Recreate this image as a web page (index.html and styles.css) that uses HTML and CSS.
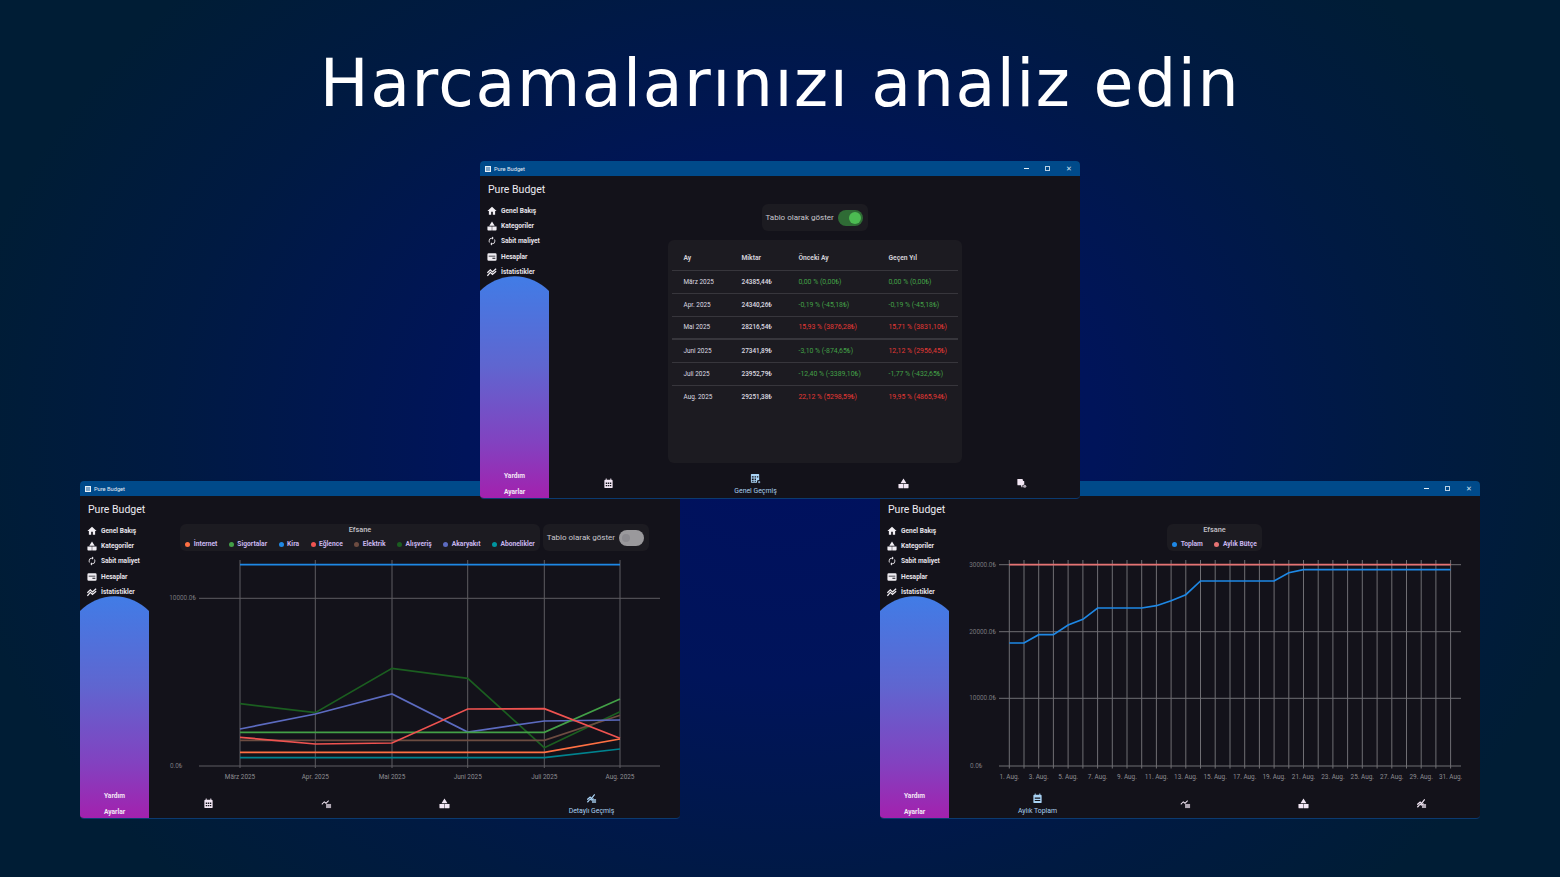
FILE: index.html
```html
<!DOCTYPE html>
<html lang="tr">
<head>
<meta charset="utf-8">
<title>Pure Budget</title>
<link rel="stylesheet" href="styles.css">
</head>
<body>
<svg class="sprite" xmlns="http://www.w3.org/2000/svg">
  <symbol id="i-home" viewBox="0 0 24 24"><path d="M10 21v-7h4v7h5.500v-9H23L12 2 1 12h3.500v9z"/></symbol>
  <symbol id="i-cat" viewBox="0 0 24 24"><path d="M12 1l-6.500 10.500h13zM1 13h10.500v9.500H3a2 2 0 0 1-2-2zM12.500 13H23v7.500a2 2 0 0 1-2 2h-8.500z"/></symbol>
  <symbol id="i-renew" viewBox="0 0 24 24"><path d="M12 6v3l4-4-4-4v3c-4.420 0-8 3.580-8 8 0 1.570.46 3.030 1.240 4.260L6.700 14.800c-.45-.83-.7-1.790-.7-2.800 0-3.310 2.690-6 6-6zm6.760 1.740L17.300 9.200c.44.84.7 1.790.7 2.800 0 3.310-2.690 6-6 6v-3l-4 4 4 4v-3c4.420 0 8-3.580 8-8 0-1.570-.46-3.030-1.240-4.260z"/></symbol>
  <symbol id="i-wallet" viewBox="0 0 24 24"><path fill-rule="evenodd" d="M4 3h16a3 3 0 0 1 3 3v12a3 3 0 0 1-3 3H4a3 3 0 0 1-3-3V6a3 3 0 0 1 3-3zM4 9v2h16V9zM13 14v2h7v-2z"/></symbol>
  <symbol id="i-stats" viewBox="0 0 24 24"><path fill="none" stroke="#f1eef3" stroke-width="3" d="M1 14l7-7 5 5 9-8M1 21l7-8 5 5 9-8"/></symbol>
  <symbol id="i-cal" viewBox="0 0 24 24"><path fill-rule="evenodd" d="M6 1h2v3h8V1h2v3h1a2 2 0 0 1 2 2v14a2 2 0 0 1-2 2H5a2 2 0 0 1-2-2V6a2 2 0 0 1 2-2h1zM6 10v3h3v-3zM10.500 10v3h3v-3zM15 10v3h3v-3zM6 15v3h3v-3zM10.500 15v3h3v-3zM15 15v3h3v-3z"/></symbol>
  <symbol id="i-month" viewBox="0 0 24 24"><path fill-rule="evenodd" d="M6 1h2v3h8V1h2v3h1a2 2 0 0 1 2 2v14a2 2 0 0 1-2 2H5a2 2 0 0 1-2-2V6a2 2 0 0 1 2-2h1zM6 10v2.500h12V10zM6 15v2.500h12V15z"/></symbol>
  <symbol id="i-trend" viewBox="0 0 24 24"><path d="M1 13l6-6 4 3 5-5 1.500 1.500L11 13 7 10l-4.500 4.500z"/><path opacity=".7" d="M11 13h11v9H11z"/></symbol>
  <symbol id="i-table" viewBox="0 0 24 24"><path fill-rule="evenodd" d="M3 2h16a1 1 0 0 1 1 1v12l-4 1-1 5H3a1 1 0 0 1-1-1V3a1 1 0 0 1 1-1zM4 7v3h4V7zM10 7v3h3V7zM15 7v3h3V7zM4 12v3h4v-3zM10 12v3h3v-3zM4 17v2h4v-2zM10 17v2h3v-2z"/><circle cx="20" cy="20" r="2.500" opacity=".7"/></symbol>
  <symbol id="i-pile" viewBox="0 0 24 24"><path d="M3 2h10a2 2 0 0 1 2 2v2l3 1v7l-4 2v4h-2l-1-4H5a2 2 0 0 1-2-2z"/><circle cx="19" cy="18" r="3.500" opacity=".7"/></symbol>
  <symbol id="i-detail" viewBox="0 0 24 24"><path d="M2 13l7-6 3 3 6-8 2 2-8 10-3-3-5.500 5zM2 19l7-7 3 2 4-3 1 2-5 4-3-2-5 6z"/><path opacity=".7" d="M13 13h9v9h-9z"/></symbol>
</svg>

<h1 class="headline">Harcamalarınızı analiz edin</h1>

<!-- sol pencere -->
<section class="window win-left">
  <header class="titlebar">
    <span class="app-icon"></span><span class="app-name">Pure Budget</span>
    <span class="win-controls"><i class="ctl-min"></i><i class="ctl-max"></i><i class="ctl-close">✕</i></span>
  </header>
  <div class="app">
    <aside class="sidebar">
      <div class="brand">Pure Budget</div>
      <nav class="rail">
        <a><svg><use href="#i-home"/></svg>Genel Bakış</a>
        <a><svg><use href="#i-cat"/></svg>Kategoriler</a>
        <a><svg><use href="#i-renew"/></svg>Sabit maliyet</a>
        <a><svg><use href="#i-wallet"/></svg>Hesaplar</a>
        <a><svg><use href="#i-stats"/></svg>İstatistikler</a>
      </nav>
      <div class="dome"><span>Yardım</span><span>Ayarlar</span></div>
    </aside>
    <main class="main">
      <div class="top-row">
        <div class="panel legend">
          <div class="legend-title">Efsane</div>
          <ul class="legend-items">
            <li><b class="dot c-orange"></b>İnternet</li>
            <li><b class="dot c-green"></b>Sigortalar</li>
            <li><b class="dot c-blue"></b>Kira</li>
            <li><b class="dot c-red"></b>Eğlence</li>
            <li><b class="dot c-brown"></b>Elektrik</li>
            <li><b class="dot c-dkgreen"></b>Alışveriş</li>
            <li><b class="dot c-indigo"></b>Akaryakıt</li>
            <li><b class="dot c-teal"></b>Abonelikler</li>
          </ul>
        </div>
        <div class="panel toggle-box">Tablo olarak göster<span class="switch"></span></div>
      </div>
      <svg class="chart" viewBox="0 0 531 235">
        <g class="grid">
          <path d="M50 43.300H511M50 211H511"/>
          <path d="M91 5V213M166.300 5V213M243 5V213M318.700 5V213M395.300 5V213M471 5V213"/>
        </g>
        <g class="axis">
          <text x="47" y="45.300" text-anchor="end" class="faint">10000.0₺</text>
          <text x="21" y="213" class="faint">0.0₺</text>
          <text x="91" y="224" text-anchor="middle">März 2025</text>
          <text x="166.300" y="224" text-anchor="middle">Apr. 2025</text>
          <text x="243" y="224" text-anchor="middle">Mai 2025</text>
          <text x="318.700" y="224" text-anchor="middle">Juni 2025</text>
          <text x="395.300" y="224" text-anchor="middle">Juli 2025</text>
          <text x="471" y="224" text-anchor="middle">Aug. 2025</text>
        </g>
        <g class="lines">
          <polyline stroke="#1b5e20" points="91,148.700 166.300,157.700 243,113.300 318.700,123.300 395.300,192.700 471,156.700"/>
          <polyline stroke="#6d4c41" points="91,185.300 166.300,185.300 243,185.300 318.700,185.300 395.300,185.300 471,160.300"/>
          <polyline stroke="#5c6bc0" points="91,174 166.300,159 243,139 318.700,177 395.300,166 471,165"/>
          <polyline stroke="#43a047" points="91,177.300 166.300,177.300 243,177.300 318.700,177.300 395.300,177.300 471,144"/>
          <polyline stroke="#ef5350" points="91,182.300 166.300,189 243,188 318.700,154 395.300,153.700 471,183.300"/>
          <polyline stroke="#ff7043" points="91,197.300 166.300,197.300 243,197.300 318.700,197.300 395.300,197.300 471,184"/>
          <polyline stroke="#00838f" points="91,202.700 166.300,202.700 243,202.700 318.700,202.700 395.300,202.700 471,194"/>
          <polyline stroke="#1e88e5" points="91,9.700 471,9.700"/>
        </g>
      </svg>
      <nav class="tabs">
        <a><svg><use href="#i-cal"/></svg></a>
        <a><svg><use href="#i-trend"/></svg></a>
        <a><svg><use href="#i-cat"/></svg></a>
        <a class="active"><svg><use href="#i-detail"/></svg>Detaylı Geçmiş</a>
      </nav>
    </main>
  </div>
</section>

<!-- sag pencere -->
<section class="window win-right">
  <header class="titlebar">
    <span class="app-icon"></span><span class="app-name">Pure Budget</span>
    <span class="win-controls"><i class="ctl-min"></i><i class="ctl-max"></i><i class="ctl-close">✕</i></span>
  </header>
  <div class="app">
    <aside class="sidebar">
      <div class="brand">Pure Budget</div>
      <nav class="rail">
        <a><svg><use href="#i-home"/></svg>Genel Bakış</a>
        <a><svg><use href="#i-cat"/></svg>Kategoriler</a>
        <a><svg><use href="#i-renew"/></svg>Sabit maliyet</a>
        <a><svg><use href="#i-wallet"/></svg>Hesaplar</a>
        <a><svg><use href="#i-stats"/></svg>İstatistikler</a>
      </nav>
      <div class="dome"><span>Yardım</span><span>Ayarlar</span></div>
    </aside>
    <main class="main">
      <div class="top-row">
        <div class="panel legend">
          <div class="legend-title">Efsane</div>
          <ul class="legend-items">
            <li><b class="dot c-blue"></b>Toplam</li>
            <li><b class="dot c-salmon"></b>Aylık Bütçe</li>
          </ul>
        </div>
      </div>
      <svg class="chart" viewBox="0 0 531 235">
        <g class="grid">
          <path d="M50 9.700H512M50 76.700H512M50 143.300H512M50 211H512"/>
          <path d="M60.300 5V213.500M75 5V213.500M89.700 5V213.500M104.400 5V213.500M119.100 5V213.500M133.900 5V213.500M148.600 5V213.500M163.300 5V213.500M178 5V213.500M192.700 5V213.500M207.400 5V213.500M222.100 5V213.500M236.800 5V213.500M251.500 5V213.500M266.200 5V213.500M281 5V213.500M295.700 5V213.500M310.400 5V213.500M325.100 5V213.500M339.800 5V213.500M354.500 5V213.500M369.200 5V213.500M383.900 5V213.500M398.600 5V213.500M413.300 5V213.500M428.100 5V213.500M442.800 5V213.500M457.500 5V213.500M472.200 5V213.500M486.900 5V213.500M501.600 5V213.500"/>
        </g>
        <g class="axis">
          <text x="47" y="11.700" text-anchor="end" class="faint">30000.0₺</text>
          <text x="47" y="78.700" text-anchor="end" class="faint">20000.0₺</text>
          <text x="47" y="145.300" text-anchor="end" class="faint">10000.0₺</text>
          <text x="21" y="213" class="faint">0.0₺</text>
          <text x="60.300" y="223.500" text-anchor="middle">1. Aug.</text>
          <text x="89.700" y="223.500" text-anchor="middle">3. Aug.</text>
          <text x="119.100" y="223.500" text-anchor="middle">5. Aug.</text>
          <text x="148.600" y="223.500" text-anchor="middle">7. Aug.</text>
          <text x="178" y="223.500" text-anchor="middle">9. Aug.</text>
          <text x="207.400" y="223.500" text-anchor="middle">11. Aug.</text>
          <text x="236.800" y="223.500" text-anchor="middle">13. Aug.</text>
          <text x="266.200" y="223.500" text-anchor="middle">15. Aug.</text>
          <text x="295.700" y="223.500" text-anchor="middle">17. Aug.</text>
          <text x="325.100" y="223.500" text-anchor="middle">19. Aug.</text>
          <text x="354.500" y="223.500" text-anchor="middle">21. Aug.</text>
          <text x="383.900" y="223.500" text-anchor="middle">23. Aug.</text>
          <text x="413.300" y="223.500" text-anchor="middle">25. Aug.</text>
          <text x="442.800" y="223.500" text-anchor="middle">27. Aug.</text>
          <text x="472.200" y="223.500" text-anchor="middle">29. Aug.</text>
          <text x="501.600" y="223.500" text-anchor="middle">31. Aug.</text>
        </g>
        <g class="lines">
          <polyline stroke="#1e88e5" points="60.300,88 75,88 89.700,79.700 104.400,79.700 119.100,70 133.900,64.300 148.600,53 192.700,53 207.400,50.700 222.100,45.700 236.800,39.700 251.500,26 325.100,26 339.800,17.700 354.500,14.700 501.600,14.700"/>
          <polyline stroke="#e57373" points="60.300,9.700 501.600,9.700"/>
        </g>
      </svg>
      <nav class="tabs">
        <a class="active"><svg><use href="#i-month"/></svg>Aylık Toplam</a>
        <a><svg><use href="#i-trend"/></svg></a>
        <a><svg><use href="#i-cat"/></svg></a>
        <a><svg><use href="#i-detail"/></svg></a>
      </nav>
    </main>
  </div>
</section>

<!-- orta pencere -->
<section class="window win-center">
  <header class="titlebar">
    <span class="app-icon"></span><span class="app-name">Pure Budget</span>
    <span class="win-controls"><i class="ctl-min"></i><i class="ctl-max"></i><i class="ctl-close">✕</i></span>
  </header>
  <div class="app">
    <aside class="sidebar">
      <div class="brand">Pure Budget</div>
      <nav class="rail">
        <a><svg><use href="#i-home"/></svg>Genel Bakış</a>
        <a><svg><use href="#i-cat"/></svg>Kategoriler</a>
        <a><svg><use href="#i-renew"/></svg>Sabit maliyet</a>
        <a><svg><use href="#i-wallet"/></svg>Hesaplar</a>
        <a><svg><use href="#i-stats"/></svg>İstatistikler</a>
      </nav>
      <div class="dome"><span>Yardım</span><span>Ayarlar</span></div>
    </aside>
    <main class="main">
      <div class="top-row">
        <div class="panel toggle-box">Tablo olarak göster<span class="switch on"></span></div>
      </div>
      <div class="table-wrap">
        <div class="panel table-card">
          <table class="history">
            <thead>
              <tr><th>Ay</th><th>Miktar</th><th>Önceki Ay</th><th>Geçen Yıl</th></tr>
            </thead>
            <tbody>
              <tr><td>März 2025</td><td class="amount">24385,44₺</td><td class="down">0,00 % (0,00₺)</td><td class="down">0,00 % (0,00₺)</td></tr>
              <tr><td>Apr. 2025</td><td class="amount">24340,26₺</td><td class="down">-0,19 % (-45,18₺)</td><td class="down">-0,19 % (-45,18₺)</td></tr>
              <tr><td>Mai 2025</td><td class="amount">28216,54₺</td><td class="up">15,93 % (3876,28₺)</td><td class="up">15,71 % (3831,10₺)</td></tr>
              <tr class="heavy"><td>Juni 2025</td><td class="amount">27341,89₺</td><td class="down">-3,10 % (-874,65₺)</td><td class="up">12,12 % (2956,45₺)</td></tr>
              <tr><td>Juli 2025</td><td class="amount">23952,79₺</td><td class="down">-12,40 % (-3389,10₺)</td><td class="down">-1,77 % (-432,65₺)</td></tr>
              <tr><td>Aug. 2025</td><td class="amount">29251,38₺</td><td class="up">22,12 % (5298,59₺)</td><td class="up">19,95 % (4865,94₺)</td></tr>
            </tbody>
          </table>
        </div>
      </div>
      <nav class="tabs">
        <a><svg><use href="#i-cal"/></svg></a>
        <a class="active"><svg><use href="#i-table"/></svg>Genel Geçmiş</a>
        <a><svg><use href="#i-cat"/></svg></a>
        <a><svg><use href="#i-pile"/></svg></a>
      </nav>
    </main>
  </div>
</section>
</body>
</html>
```

FILE: styles.css
```css
html, body {
    margin: 0;
    height: 100%;
}
body {
    position: relative;
    overflow: hidden;
    font-family: Roboto, "Liberation Sans", sans-serif;
    background: radial-gradient(ellipse 900px 700px at 50% 50%, #00105f 0%, #00145a 35%, #001a42 68%, #001d35 92%);
}
.sprite {
    display: none;
}
.headline {
    margin: 0;
    padding-top: 44px;
    text-align: center;
    font-family: "DejaVu Sans", sans-serif;
    font-weight: 400;
    font-size: 65px;
    line-height: 80px;
    letter-spacing: 1.5px;
    color: #fff;
}

/* windows sit on the desktop */
.window {
    position: absolute;
    width: 600px;
    height: 338px;
    display: flex;
    flex-direction: column;
    box-sizing: border-box;
    background: #13121a;
    border-bottom: 1px solid #0b3a70;
    border-radius: 4px;
    overflow: hidden;
}
.win-center { left: 480px; top: 161px; }
.win-left { left: 80px; top: 481px; }
.win-right { left: 880px; top: 481px; }

.titlebar {
    height: 15px;
    flex: none;
    display: flex;
    align-items: center;
    padding-left: 5px;
    background: #004a8a;
    color: #e4edf5;
    font-size: 5.700px;
}
.app-icon {
    width: 6px;
    height: 6px;
    margin-right: 3px;
    box-sizing: border-box;
    background: #7fa6c8;
    border: 1.500px solid #e6eef5;
}
.win-controls {
    margin-left: auto;
    padding-right: 1px;
    display: flex;
    align-items: center;
    color: #cfe0ee;
}
.win-controls i {
    width: 21px;
    height: 15px;
    display: flex;
    align-items: center;
    justify-content: center;
    font-style: normal;
    font-size: 7px;
}
.ctl-min::before {
    content: "";
    width: 5px;
    height: 1px;
    background: #e4edf5;
}
.ctl-max::before {
    content: "";
    width: 3px;
    height: 3px;
    border: 1px solid #b9cfe2;
}

.app {
    flex: 1;
    display: flex;
    min-height: 0;
}

/* sidebar */
.sidebar {
    width: 69px;
    flex: none;
    display: flex;
    flex-direction: column;
}
.brand {
    height: 18px;
    margin-top: 5px;
    padding-left: 8px;
    font-size: 10.500px;
    line-height: 18px;
    color: #eceaf0;
    white-space: nowrap;
}
.rail {
    margin-top: 4px;
    height: 73px;
}
.rail a {
    height: 15.300px;
    display: flex;
    align-items: center;
    padding-left: 7px;
    font-size: 6.600px;
    font-weight: 700;
    color: #e6e3ea;
    white-space: nowrap;
}
.rail svg {
    width: 10px;
    height: 10px;
    margin-right: 4px;
    fill: #f1eef3;
}
.dome {
    flex: 1;
    display: flex;
    flex-direction: column;
    align-items: center;
    justify-content: flex-end;
    gap: 7.500px;
    padding-bottom: 2.500px;
    clip-path: path("M0 15 A48 48 0 0 1 69 15 V300 H0 Z");
    background: linear-gradient(#417ce6 0%, #5f66d0 40%, #8242c0 75%, #a321ae 100%);
    font-size: 6.600px;
    font-weight: 700;
    color: #f4e8f6;
}

/* main column */
.main {
    flex: 1;
    min-width: 0;
    display: flex;
    flex-direction: column;
}
.top-row {
    margin-top: 28px;
    height: 27px;
    flex: none;
    display: flex;
    justify-content: center;
    gap: 3px;
}
.panel {
    background: #1c1b21;
    border-radius: 6px;
}
.legend {
    padding: 2px 5px 0;
}
.legend-title {
    text-align: center;
    font-size: 7.400px;
    line-height: 8px;
    font-weight: 500;
    color: #c4c2c9;
}
.legend-items {
    list-style: none;
    margin: 5px 0 0;
    padding: 0;
    display: flex;
    gap: 11.500px;
    font-size: 6.700px;
    line-height: 10px;
    font-weight: 700;
    color: #c9b6ee;
    white-space: nowrap;
}
.legend-items li {
    display: flex;
    align-items: center;
}
.dot {
    width: 5px;
    height: 5px;
    margin-right: 3.500px;
    border-radius: 50%;
}
.c-orange { background: #ff7043; }
.c-green { background: #43a047; }
.c-blue { background: #1e88e5; }
.c-red { background: #ef5350; }
.c-brown { background: #6d4c41; }
.c-dkgreen { background: #1b5e20; }
.c-indigo { background: #5c6bc0; }
.c-teal { background: #00959f; }
.c-salmon { background: #e57373; }

.toggle-box {
    width: 106px;
    box-sizing: border-box;
    display: flex;
    align-items: center;
    justify-content: space-between;
    padding: 0 5px 0 4px;
    font-size: 8px;
    color: #c9c7cd;
    white-space: nowrap;
}
.switch {
    position: relative;
    width: 25px;
    height: 16px;
    border-radius: 8px;
    background: #9a999c;
}
.switch::after {
    content: "";
    position: absolute;
    left: 3px;
    top: 4px;
    width: 8px;
    height: 8px;
    border-radius: 50%;
    background: #8c8b90;
}
.switch.on {
    background: #2f6b35;
}
.switch.on::after {
    left: 11px;
    top: 2px;
    width: 12px;
    height: 12px;
    background: #4cbb52;
}

/* table page */
.table-wrap {
    flex: 1;
    min-height: 0;
    display: flex;
    justify-content: center;
    padding-top: 9px;
}
.table-card {
    width: 294px;
    height: 223px;
    box-sizing: border-box;
    padding: 0 4px;
}
.history {
    width: 286px;
    table-layout: fixed;
    border-collapse: collapse;
    font-size: 6.400px;
    color: #dedce2;
}
.history th {
    height: 30px;
    padding: 6px 0 0 12px;
    box-sizing: border-box;
    text-align: left;
    font-size: 6.700px;
    font-weight: 700;
    color: #d0ced5;
}
.history th:nth-child(1) { width: 58px; }
.history th:nth-child(2) { width: 57px; }
.history th:nth-child(3) { width: 90px; }
.history td {
    height: 23px;
    padding: 0 0 0 12px;
    box-sizing: border-box;
    border-top: 1px solid #37363c;
    white-space: nowrap;
}
.history tr.heavy td {
    border-top: 2px solid #37363c;
}
.history .amount {
    font-weight: 500;
}
.history .down {
    font-size: 6.900px;
    color: #43a047;
}
.history .up {
    font-size: 6.900px;
    color: #e53935;
}

/* charts */
.chart {
    flex: 1;
    min-height: 0;
    width: 531px;
    margin-top: 4px;
    display: block;
}
.grid path {
    fill: none;
    stroke: #5e5d62;
    stroke-width: 1;
}
.win-right .grid path {
    stroke: #6f6e73;
}
.axis text {
    font-size: 6.400px;
    fill: #8e8d92;
}
.axis .faint {
    fill: #77767b;
}
.lines polyline {
    fill: none;
    stroke-width: 1.700;
}

/* bottom tabs */
.tabs {
    height: 28px;
    padding-bottom: 1px;
    box-sizing: border-box;
    flex: none;
    display: flex;
    align-items: center;
}
.tabs a {
    flex: 1;
    display: flex;
    flex-direction: column;
    align-items: center;
}
.tabs svg {
    width: 11px;
    height: 11px;
    fill: #f2e6f4;
}
.tabs a.active {
    flex: 1.500;
    font-size: 6.900px;
    line-height: 8px;
    color: #a9cfee;
    white-space: nowrap;
}
.tabs a.active svg {
    margin-bottom: 3px;
    fill: #a9d3f5;
}
```
